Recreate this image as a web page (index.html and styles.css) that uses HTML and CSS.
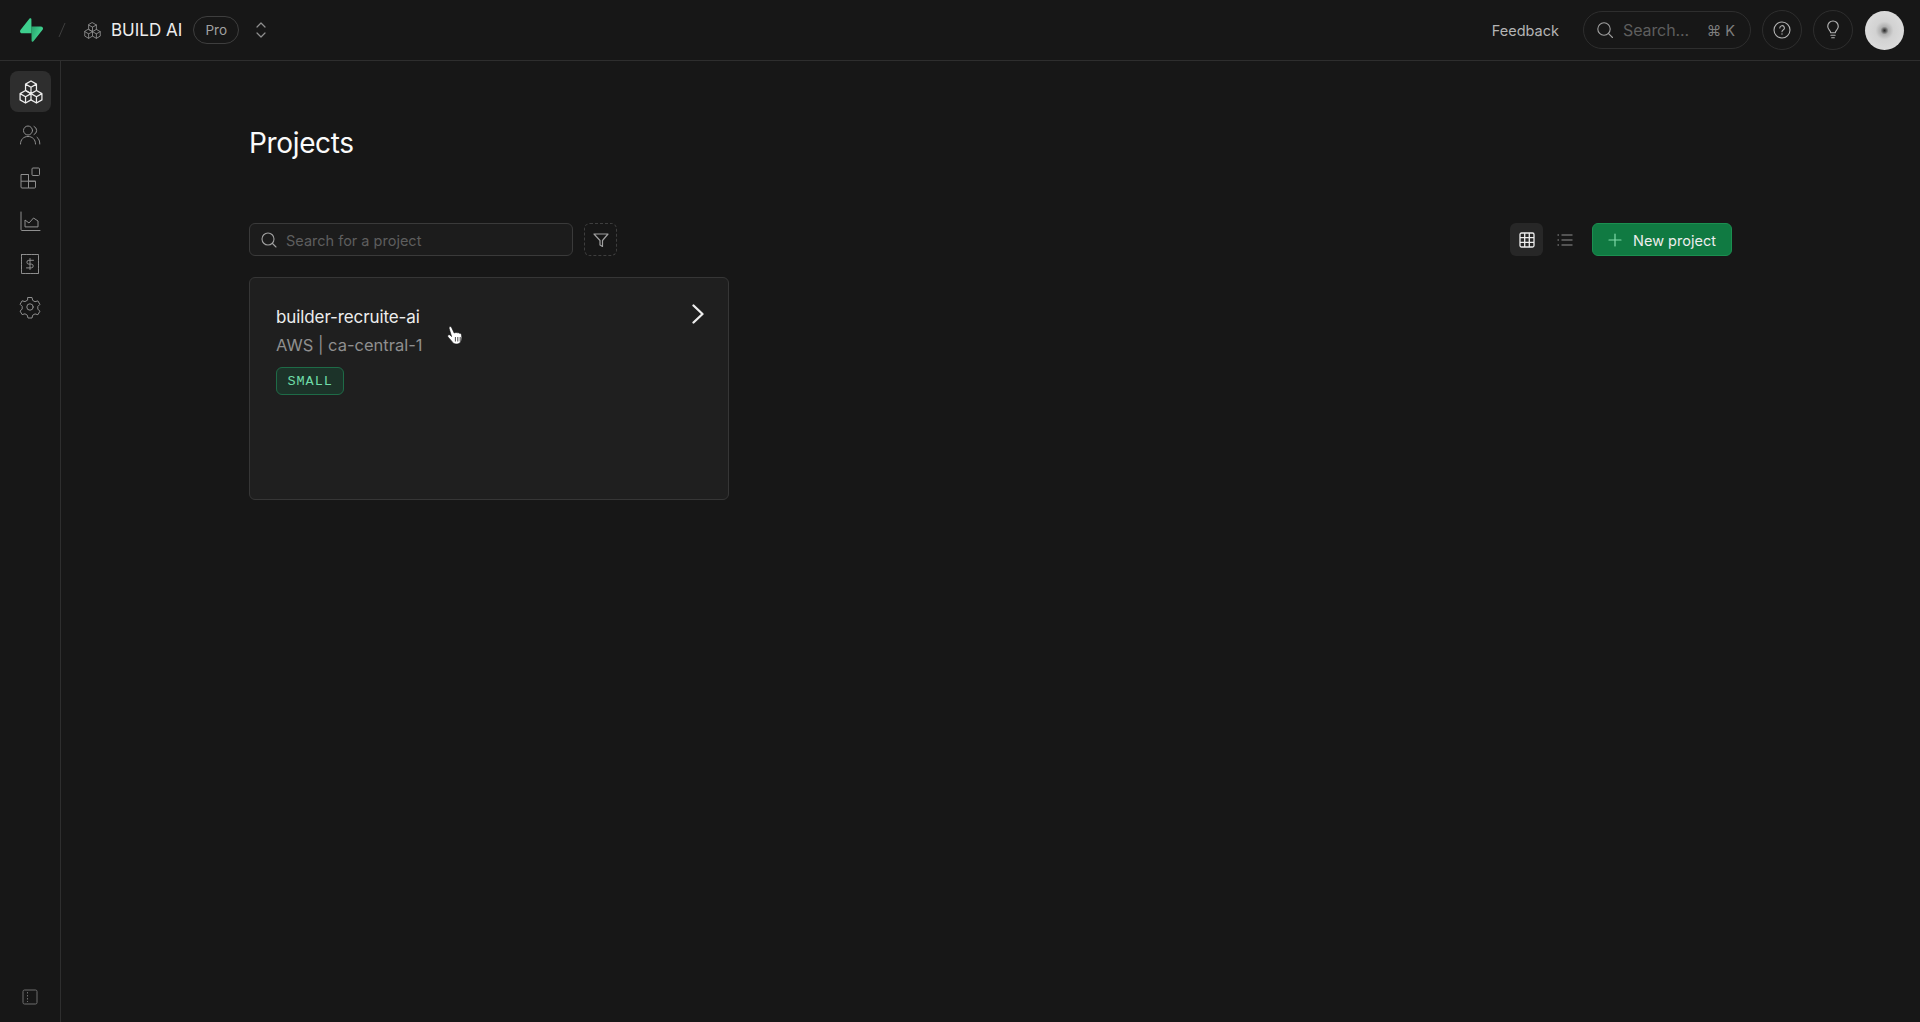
FILE: index.html
```html
<!DOCTYPE html>
<html lang="en">
<head>
<meta charset="utf-8">
<title>Projects</title>
<link rel="stylesheet" href="styles.css">
</head>
<body>
<svg class="defs" width="0" height="0" aria-hidden="true">
  <defs>
    <symbol id="cubes" viewBox="0 0 24 24">
      <g fill="none" stroke="currentColor" stroke-width="1.25" stroke-linejoin="round" stroke-linecap="round">
        <path d="M12 1l5.46 3.150v6.300L12 13.600l-5.460-3.150v-6.300zM6.540 4.150L12 7.300l5.460-3.150M12 7.300v6.300"/>
        <path d="M6.540 10.450L12 13.600v6.300l-5.460 3.150L1.080 19.900v-6.300zM1.080 13.600l5.460 3.150L12 13.600M6.540 16.750v6.300"/>
        <path d="M17.460 10.450l5.460 3.150v6.300l-5.460 3.150L12 19.900M17.460 16.750v6.300M12 13.600l5.460 3.150 5.460-3.150"/>
      </g>
    </symbol>
    <linearGradient id="sb-a" x1="53.97" y1="54.97" x2="94.16" y2="71.83" gradientUnits="userSpaceOnUse">
      <stop offset="0" stop-color="#2aa56e"/><stop offset="1" stop-color="#3ecf8e"/>
    </linearGradient>
  </defs>
</svg>

<header class="topbar">
  <svg class="logo" viewBox="0 0 109 113" aria-hidden="true">
    <path fill="url(#sb-a)" d="M63.7 110.3c-2.900 3.600-8.700 1.600-8.700-3L54 40h45.200c8.200 0 12.800 9.500 7.700 15.900z"/>
    <path fill="#3ecf8e" d="M45.300 2.100c2.900-3.600 8.700-1.600 8.700 3l.5 67.200H9.800c-8.200 0-12.700-9.500-7.600-15.900z"/>
  </svg>
  <svg class="slash" viewBox="0 0 10 20" aria-hidden="true"><path d="M8 3L2 17" stroke="currentColor" fill="none"/></svg>
  <svg class="org-icon" aria-hidden="true"><use href="#cubes"/></svg>
  <span class="org-name">BUILD AI</span>
  <span class="plan">Pro</span>
  <svg class="updown" viewBox="0 0 16 20" aria-hidden="true"><path d="M4 7l4-4 4 4M4 13l4 4 4-4" fill="none" stroke="currentColor" stroke-width="1.200" stroke-linecap="round" stroke-linejoin="round"/></svg>

  <div class="top-right">
    <span class="feedback">Feedback</span>
    <div class="global-search">
      <svg class="ico-18" viewBox="0 0 18 18" aria-hidden="true"><circle cx="8" cy="8" r="6.200" fill="none" stroke="currentColor" stroke-width="1.100"/><path d="M12.600 12.600L16.500 16.500" stroke="currentColor" stroke-width="1.100" stroke-linecap="round"/></svg>
      <span class="gs-label">Search...</span>
      <span class="gs-key">⌘ K</span>
    </div>
    <button class="round-btn" type="button" aria-label="Help">
      <svg class="ico-18" viewBox="0 0 18 18" aria-hidden="true"><circle cx="9" cy="9" r="8" fill="none" stroke="currentColor" stroke-width="1.100"/><path d="M6.800 7a2.300 2.300 0 1 1 3.400 2c-.8.5-1.200.9-1.200 1.700" fill="none" stroke="currentColor" stroke-width="1.100" stroke-linecap="round"/><circle cx="9" cy="13" r=".7" fill="currentColor"/></svg>
    </button>
    <button class="round-btn" type="button" aria-label="Ideas">
      <svg class="ico-bulb" viewBox="0 0 16 22" aria-hidden="true"><path d="M5.400 14.200c0-1.600-.8-2.400-1.900-3.600A6 6 0 0 1 2 6.700 6 6 0 0 1 14 6.700c0 1.500-.5 2.900-1.500 3.900-1.100 1.200-1.900 2-1.900 3.600zM5.600 17h4.800M6.500 19.800h3" fill="none" stroke="currentColor" stroke-width="1.300" stroke-linecap="round" stroke-linejoin="round"/></svg>
    </button>
    <div class="avatar"></div>
  </div>
</header>

<div class="layout">
  <nav class="sidebar">
    <a class="nav-item active"><svg class="ico-24" aria-hidden="true"><use href="#cubes"/></svg></a>
    <a class="nav-item">
      <svg class="ico-24" viewBox="0 0 24 24" aria-hidden="true"><g fill="none" stroke="currentColor" stroke-linecap="round" stroke-linejoin="round"><circle cx="10" cy="7.500" r="4.500"/><path d="M2.500 21c0-4.500 3-7.500 7.500-7.500s7.500 3 7.500 7.500M16 3.400a4.500 4.500 0 0 1 0 8.200M19 14.300c1.800 1.300 2.800 3.600 2.800 6.700"/></g></svg>
    </a>
    <a class="nav-item">
      <svg class="ico-24" viewBox="0 0 24 24" aria-hidden="true"><g fill="none" stroke="currentColor" stroke-linejoin="round"><path d="M3 8.500h7.500V22H4a1 1 0 0 1-1-1zM3 15.200h14.500V21a1 1 0 0 1-1 1h-6"/><path d="M10.500 8.500v6.700h7"/><rect x="14" y="2" width="7.500" height="7.500" rx="1"/></g></svg>
    </a>
    <a class="nav-item">
      <svg class="ico-24" viewBox="0 0 24 24" aria-hidden="true"><g fill="none" stroke="currentColor" stroke-linecap="round" stroke-linejoin="round"><path d="M3 3v17.500a1 1 0 0 0 1 1h18"/><path d="M7 17.500V11l4 3 4.500-5 4.500 3v5.500z"/></g></svg>
    </a>
    <a class="nav-item">
      <svg class="ico-24" viewBox="0 0 24 24" aria-hidden="true"><g fill="none" stroke="currentColor" stroke-linecap="round" stroke-linejoin="round"><path d="M3.500 2.500h17v19h-17z" stroke-dasharray="2 .6"/><path d="M15.500 8.300H10.800a1.900 1.900 0 0 0 0 3.800h2.500a1.900 1.900 0 0 1 0 3.800H8.500M12 6.500v11"/></g></svg>
    </a>
    <a class="nav-item">
      <svg class="ico-24" viewBox="0 0 24 24" aria-hidden="true"><g fill="none" stroke="currentColor" stroke-linecap="round" stroke-linejoin="round"><circle cx="12" cy="12" r="3.200"/><path d="M10 2.500h4l.7 2.900 2.300 1.300 2.900-.8 2 3.500-2.100 2.100v2.600l2.100 2.100-2 3.500-2.900-.8-2.300 1.300-.7 2.800h-4l-.7-2.800L7 18.800l-2.900.8-2-3.500 2.100-2.100v-2.600L2.100 9.300l2-3.500 2.900.8 2.300-1.300z"/></g></svg>
    </a>
    <a class="nav-item collapse">
      <svg class="ico-16" viewBox="0 0 16 16" aria-hidden="true"><rect x="1" y="1" width="14" height="14" rx="1.500" fill="none" stroke="currentColor"/><path d="M5.500 3v1.500M5.500 6v1.500M5.500 9v1.500M5.500 12v1" stroke="currentColor" stroke-width="1"/></svg>
    </a>
  </nav>

  <main class="main">
    <h1 class="title">Projects</h1>
    <div class="toolbar">
      <div class="project-search">
        <svg class="ico-18" viewBox="0 0 18 18" aria-hidden="true"><circle cx="8" cy="8" r="6" fill="none" stroke="currentColor" stroke-width="1.100"/><path d="M12.500 12.500L16 16" stroke="currentColor" stroke-width="1.100" stroke-linecap="round"/></svg>
        <span class="ps-label">Search for a project</span>
      </div>
      <button class="filter-btn" type="button" aria-label="Filter">
        <svg class="ico-18" viewBox="0 0 18 18" aria-hidden="true"><path d="M2 3h14l-5.500 6.500V15.500L8 14V9.500z" fill="none" stroke="currentColor" stroke-width="1.200" stroke-linejoin="round"/></svg>
      </button>
      <div class="toolbar-right">
        <button class="view-btn active" type="button" aria-label="Grid view">
          <svg class="ico-16" viewBox="0 0 16 16" aria-hidden="true"><rect x="1" y="1" width="14" height="14" rx="1.500" fill="none" stroke="currentColor" stroke-width="1.300"/><path d="M1 5.700h14M1 10.300h14M5.700 1v14M10.300 1v14" stroke="currentColor" stroke-width="1.300"/></svg>
        </button>
        <button class="view-btn list" type="button" aria-label="List view">
          <svg class="ico-16" viewBox="0 0 16 16" aria-hidden="true"><path d="M4.500 3h11M4.500 8h11M4.500 13h11M.5 3h1.500M.5 8h1.500M.5 13h1.500" stroke="currentColor" stroke-width="1.100"/></svg>
        </button>
        <button class="new-btn" type="button">
          <svg class="ico-14" viewBox="0 0 14 14" aria-hidden="true"><path d="M7 1v12M1 7h12" stroke="currentColor" stroke-width="1.200" stroke-linecap="round"/></svg>
          <span class="new-label">New project</span>
        </button>
      </div>
    </div>

    <article class="card">
      <div class="card-top">
        <div class="card-text">
          <div class="card-name">builder-recruite-ai</div>
          <div class="card-meta">AWS | ca-central-1</div>
        </div>
        <svg class="card-chevron" viewBox="0 0 14 20" aria-hidden="true"><path d="M2.500 1.500L11.500 10l-9 8.500" fill="none" stroke="currentColor" stroke-width="2.300" stroke-linecap="round" stroke-linejoin="round"/></svg>
      </div>
      <span class="badge">SMALL</span>
      <svg class="pointer" viewBox="0 0 18 20" aria-hidden="true"><path d="M2.600.8c.8-.5 1.700 0 2.100.9l2.500 5.400c.5-.6 1.300-.7 1.800-.2.500-.5 1.400-.5 1.800.1.600-.4 1.400-.2 1.800.4.700-.3 1.400.1 1.700.8.700 2.300.6 4.700-.2 6.700-.8 2-2.500 3.100-4.500 3.100-2.400 0-4-1.100-5.100-3.100L1 11c-.5-.9-.2-1.700.4-2.100.7-.4 1.500-.2 2.100.5l1.100 1.200L2.300 3c-.3-.9-.3-1.700.3-2.200z" fill="#fff" stroke="#111" stroke-width=".6"/><path d="M8.400 11v4.500M10.800 11v4.500M13.200 11v4.500" stroke="#333" stroke-width=".9"/></svg>
    </article>
  </main>
</div>
</body>
</html>
```

FILE: styles.css
```css
* { box-sizing: border-box; }
html, body { margin: 0; height: 100%; }
body {
  background: #171717;
  color: #fafafa;
  font-family: Inter, "Liberation Sans", sans-serif;
  overflow: hidden;
  display: flex;
  flex-direction: column;
}
.defs { position: absolute; }
button { font: inherit; color: inherit; background: none; padding: 0; cursor: pointer; }

.ico-24 { width: 24px; height: 24px; display: block; }
.ico-18 { width: 18px; height: 18px; display: block; }
.ico-16 { width: 16px; height: 16px; display: block; }
.ico-14 { width: 14px; height: 14px; display: block; }

/* top bar */
.topbar {
  height: 61px;
  flex: none;
  border-bottom: 1px solid #2e2e2e;
  display: flex;
  align-items: center;
  padding: 0 16px 0 20px;
}
.logo { width: 23px; height: 24px; display: block; }
.slash { width: 10px; height: 20px; color: #3e3e3e; margin-left: 14px; }
.org-icon { width: 17px; height: 17px; color: #8f8f8f; margin-left: 17px; }
.org-name { font-size: 17px; margin-left: 10px; color: #ededed; }
.plan {
  margin-left: 11px;
  width: 46px;
  height: 28px;
  border: 1px solid #3e3e3e;
  border-radius: 14px;
  font-size: 13.500px;
  color: #a0a0a0;
  display: flex;
  align-items: center;
  justify-content: center;
}
.updown { width: 16px; height: 20px; color: #8f8f8f; margin-left: 14px; }

.top-right { margin-left: auto; display: flex; align-items: center; }
.feedback { font-size: 14.500px; color: #b4b4b4; margin-right: 24px; }
.global-search {
  width: 168px;
  height: 38px;
  border: 1px solid #2e2e2e;
  border-radius: 19px;
  display: flex;
  align-items: center;
  padding: 0 15px 0 12px;
  color: #a0a0a0;
}
.gs-label { font-size: 16px; color: #5e5e5e; margin-left: 9px; letter-spacing: -.1px; }
.gs-key { font-size: 14.500px; color: #7e7e7e; margin-left: auto; }
.round-btn {
  width: 40px;
  height: 40px;
  border: 1px solid #2e2e2e;
  border-radius: 50%;
  margin-left: 11px;
  color: #b4b4b4;
  display: flex;
  align-items: center;
  justify-content: center;
}
.ico-bulb { width: 14px; height: 20px; display: block; }
.avatar {
  width: 39px;
  height: 39px;
  margin-left: 12px;
  border-radius: 50%;
  background: radial-gradient(circle, #2a2a2a 0, #555 1.500px, #b0b0b0 4px, #d2d2d2 9px, #e2e2e2 100%);
}

/* frame */
.layout { flex: 1; display: flex; min-height: 0; }
.sidebar {
  width: 61px;
  flex: none;
  border-right: 1px solid #2e2e2e;
  padding: 10px 10px 5px;
  display: flex;
  flex-direction: column;
  gap: 2px;
  color: #8f8f8f;
}
.nav-item {
  width: 41px;
  height: 41px;
  border-radius: 8px;
  display: flex;
  align-items: center;
  justify-content: center;
  flex: none;
  padding-right: 1px;
}
.nav-item.active { background: #2e2e2e; color: #ededed; padding-right: 0; }
.nav-item.collapse { margin-top: auto; color: #6e6e6e; }

/* content */
.main { flex: 1; padding: 62px 0 0 188px; }
.title {
  margin: 0;
  font-size: 28px;
  line-height: 40px;
  font-weight: 400;
  letter-spacing: -.35px;
  color: #fafafa;
}
.toolbar {
  width: 1483px;
  margin-top: 60px;
  display: flex;
  align-items: center;
}
.project-search {
  width: 324px;
  height: 33px;
  border: 1px solid #3a3a3a;
  border-radius: 6px;
  background: #1c1c1c;
  display: flex;
  align-items: center;
  padding-left: 10px;
  color: #a0a0a0;
}
.ps-label { font-size: 14.500px; color: #5e5e5e; margin-left: 8px; padding-top: 1px; }
.filter-btn {
  width: 33px;
  height: 33px;
  margin-left: 11px;
  border: 1px dashed #3e3e3e;
  border-radius: 6px;
  color: #a0a0a0;
  display: flex;
  align-items: center;
  justify-content: center;
}
.toolbar-right { margin-left: auto; display: flex; align-items: center; }
.view-btn {
  width: 33px;
  height: 33px;
  border: 0;
  border-radius: 6px;
  display: flex;
  align-items: center;
  justify-content: center;
}
.view-btn.active { background: #272727; color: #ededed; }
.view-btn.list { color: #8f8f8f; margin-left: 5px; }
.new-btn {
  width: 140px;
  height: 33px;
  margin-left: 11px;
  background: #107a42;
  border: 1px solid #1b8f50;
  border-radius: 6px;
  font-size: 14.500px;
  color: #ededed;
  display: flex;
  align-items: center;
  justify-content: center;
  gap: 11px;
}
.new-btn .ico-14 { color: #7fd9a8; }
.new-label { padding-top: 1px; }

.card {
  position: relative;
  width: 480px;
  height: 223px;
  margin-top: 21px;
  background: #1f1f1f;
  border: 1px solid #363636;
  border-radius: 6px;
  padding: 26px 26px 0;
}
.card-top { display: flex; justify-content: space-between; align-items: flex-start; }
.card-name { font-size: 17px; line-height: 24px; color: #ededed; letter-spacing: -.1px; padding-top: 1px; }
.card-meta { font-size: 16.500px; line-height: 24px; margin-top: 4px; color: #8f8f8f; }
.card-chevron { width: 14px; height: 20px; color: #ededed; display: block; margin-right: -3px; }
.badge {
  display: inline-flex;
  align-items: center;
  height: 28px;
  margin-top: 10px;
  padding: 0 10.500px;
  background: #1c3329;
  border: 1px solid #1e6b47;
  border-radius: 6px;
  font-family: "Liberation Mono", monospace;
  font-size: 13.500px;
  letter-spacing: .95px;
  color: #6fdca8;
}
.pointer { position: absolute; left: 197px; top: 48px; width: 18px; height: 20px; }
```
